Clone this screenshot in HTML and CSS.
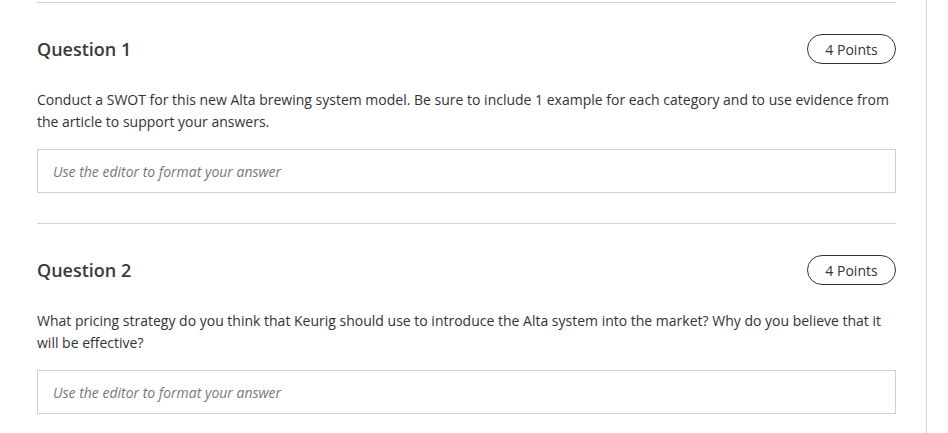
FILE: index.html
```html
<!DOCTYPE html>
<html lang="en">
<head>
<meta charset="utf-8">
<title>Questions</title>
<link rel="stylesheet" href="styles.css">
</head>
<body>
<div class="page">
  <section class="question">
    <div class="q-head">
      <h2 class="q-title">Question 1</h2>
      <span class="points">4 Points</span>
    </div>
    <p class="q-text">Conduct a SWOT for this new Alta brewing system model. Be sure to include 1 example for each category and to use evidence from the article to support your answers.</p>
    <div class="answer">Use the editor to format your answer</div>
  </section>
  <section class="question">
    <div class="q-head">
      <h2 class="q-title">Question 2</h2>
      <span class="points">4 Points</span>
    </div>
    <p class="q-text">What pricing strategy do you think that Keurig should use to introduce the Alta system into the market? Why do you believe that it will be effective?</p>
    <div class="answer">Use the editor to format your answer</div>
  </section>
</div>
</body>
</html>
```

FILE: styles.css
```css
html, body {
  margin: 0;
  padding: 0;
  background: #fff;
}
body {
  font-family: "Open Sans", "Noto Sans", sans-serif;
  color: #333;
  height: 433px;
  overflow: hidden;
}
.page {
  width: 859px;
  padding: 2px 30px 0 37px;
  border-right: 1px solid #d4d4d4;
  min-height: 431px;
}
.question {
  border-top: 1px solid #d4d4d4;
  padding-top: 31px;
  padding-bottom: 30px;
}
.q-head {
  display: flex;
  align-items: center;
  justify-content: space-between;
  height: 30px;
}
.q-title {
  margin: 0;
  font-size: 18px;
  font-weight: 600;
  color: #3a3a3a;
}
.points {
  box-sizing: border-box;
  width: 89px;
  height: 30px;
  border: 1px solid #333;
  border-radius: 15px;
  display: flex;
  align-items: center;
  justify-content: center;
  font-size: 14px;
  font-weight: 400;
  color: #333;
}
.q-text {
  margin: 25px 0 16px;
  font-size: 14px;
  line-height: 22px;
  color: #333;
}
.answer {
  box-sizing: border-box;
  height: 44px;
  border: 1px solid #cfcfcf;
  padding: 0 15px;
  display: flex;
  align-items: center;
  font-size: 14px;
  font-style: italic;
  color: #777;
}
```
